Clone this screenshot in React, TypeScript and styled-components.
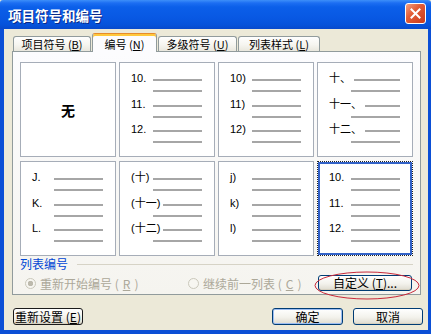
import React from 'react';
import styled, { createGlobalStyle } from 'styled-components';

const GlobalStyle = createGlobalStyle`
  html, body {
    margin: 0;
    padding: 0;
    background: #ECE9D8;
  }
  body {
    font-family: "Noto Sans CJK SC", "Liberation Sans", sans-serif;
  }
`;

const Window = styled.div`
  width: 431px;
  height: 334px;
  display: flex;
  flex-direction: column;
  background: #ECE9D8;
  overflow: hidden;
`;

const TitleBar = styled.div`
  height: 29px;
  flex: none;
  display: flex;
  align-items: center;
  justify-content: space-between;
  padding: 0 5px 0 8px;
  border-radius: 3px 3px 0 0;
  background: linear-gradient(
    to bottom,
    #3d8ff9 0px,
    #1c6ef2 3px,
    #0b5fe9 7px,
    #0858e3 18px,
    #0652da 25px,
    #0849cc 29px
  );
`;

const Title = styled.span`
  color: #fff;
  font-size: 13.5px;
  font-weight: bold;
  line-height: 16px;
  text-shadow: 1px 1px 0 #0c2a86;
`;

const CloseButton = styled.div`
  width: 21px;
  height: 21px;
  margin-top: -2px;
  box-sizing: border-box;
  border: 1px solid #fff;
  border-radius: 3px;
  display: flex;
  align-items: center;
  justify-content: center;
  background: linear-gradient(135deg, #f3a184 0%, #e35d37 40%, #c9391b 100%);
`;

const Body = styled.div`
  flex: 1;
  display: flex;
  flex-direction: column;
  border: solid #0b4fd6;
  border-width: 0 3px 4px 4px;
  padding: 4px 7px 5px 8px;
`;

const TabRow = styled.div`
  height: 18px;
  flex: none;
  display: flex;
  align-items: flex-end;
  gap: 1px;
  padding-left: 1px;
`;

const Tab = styled.div<{ $w: number; $active?: boolean }>`
  position: relative;
  z-index: ${(p) => (p.$active ? 1 : 0)};
  width: ${(p) => p.$w}px;
  height: ${(p) => (p.$active ? 19 : 15)}px;
  margin-bottom: ${(p) => (p.$active ? -1 : 0)}px;
  box-sizing: border-box;
  border: 1px solid #919b9c;
  border-bottom: none;
  border-top-color: ${(p) => (p.$active ? '#e68b2c' : '#919b9c')};
  border-radius: 3px 3px 0 0;
  display: flex;
  align-items: center;
  justify-content: center;
  padding-top: ${(p) => (p.$active ? 2 : 0)}px;
  font-size: 11px;
  color: #000;
  white-space: nowrap;
  background: ${(p) =>
    p.$active ? '#fcfcfe' : 'linear-gradient(#fefefe, #f6f5f0 55%, #e9e7dd)'};
  box-shadow: ${(p) => (p.$active ? 'inset 0 2px 0 #ffc83c' : 'none')};
`;

const Key = styled.span`
  text-decoration: underline;
`;

const Panel = styled.div`
  height: 244px;
  flex: none;
  box-sizing: border-box;
  border: 1px solid #919b9c;
  background: linear-gradient(#fcfcfe, #f5f4ef);
  padding: 10px 7px 2px 7px;
  display: flex;
  flex-direction: column;
`;

const Grid = styled.div`
  display: grid;
  grid-template-columns: repeat(4, 96px);
  grid-auto-rows: 95px;
  column-gap: 3px;
  row-gap: 4px;
`;

const Cell = styled.div<{ $selected?: boolean; $center?: boolean }>`
  box-sizing: border-box;
  background: #fff;
  border: 1px ${(p) => (p.$selected ? 'dotted #222' : 'solid #a6adb8')};
  box-shadow: ${(p) => (p.$selected ? 'inset 0 0 0 2px #3262c8' : 'none')};
  padding: 9px 12px 0 11px;
  display: flex;
  flex-direction: column;
  gap: 5.5px;
  ${(p) => p.$center && 'align-items: center; justify-content: center; padding: 0;'}
`;

const NoneText = styled.span`
  font-size: 14px;
  font-weight: bold;
  color: #000;
`;

const Item = styled.div`
  display: flex;
  flex-direction: column;
`;

const Head = styled.div`
  height: 12px;
  display: flex;
  align-items: flex-end;
`;

const Label = styled.span`
  min-width: 19px;
  font-family: "Liberation Sans", "Noto Sans CJK SC", sans-serif;
  font-size: 11px;
  line-height: 12px;
  color: #000;
  white-space: nowrap;
`;

const Line = styled.div<{ $indent?: number }>`
  height: 2px;
  background: #a6a6a6;
  flex: 1;
  margin-left: ${(p) => p.$indent ?? 3}px;
  margin-bottom: 3px;
`;

const SubLine = styled.div`
  height: 2px;
  background: #a6a6a6;
  margin: 6px 0 0 22px;
`;

const SectionRow = styled.div`
  height: 14px;
  margin-top: 1px;
  display: flex;
  align-items: center;
  gap: 9px;
`;

const SectionTitle = styled.span`
  font-size: 12px;
  line-height: 14px;
  color: #0046d5;
`;

const Rule = styled.div`
  flex: 1;
  height: 1px;
  background: #d6d3c6;
`;

const OptionRow = styled.div`
  height: 18px;
  margin-top: 3px;
  display: flex;
  align-items: center;
  padding-left: 5px;
`;

const Option = styled.label<{ $w?: number }>`
  display: flex;
  align-items: center;
  gap: 4px;
  width: ${(p) => (p.$w ? `${p.$w}px` : 'auto')};
  font-size: 12px;
  color: #aca899;
  white-space: nowrap;
`;

const Radio = styled.span<{ $checked?: boolean }>`
  width: 11px;
  height: 11px;
  flex: none;
  box-sizing: border-box;
  border-radius: 50%;
  border: 1px solid #cac8bb;
  background: ${(p) =>
    p.$checked
      ? 'radial-gradient(circle, #bdbaad 0 2.5px, #f7f6f1 3px)'
      : '#f7f6f1'};
`;

const Annotated = styled.div`
  position: relative;
  margin-left: auto;
  margin-right: 1px;
`;

const Mark = styled.svg`
  position: absolute;
  left: -4px;
  top: -4px;
  overflow: visible;
  pointer-events: none;
`;

const Button = styled.button<{ $w: number; $h?: number; $tone?: 'focus' | 'default' }>`
  width: ${(p) => p.$w}px;
  height: ${(p) => p.$h ?? 17}px;
  box-sizing: border-box;
  padding: 0;
  border: 1px solid ${(p) => (p.$tone === 'focus' ? '#1b1b1b' : '#003c74')};
  border-radius: 3px;
  background: linear-gradient(#ffffff, #f3f2ec 55%, #dedbcf);
  box-shadow: ${(p) =>
    p.$tone === 'default' ? 'inset 0 0 0 1px #9cbdf2' : 'inset 0 -1px 0 #d6d0c0'};
  font-family: "Noto Sans CJK SC", "Liberation Sans", sans-serif;
  font-size: 12px;
  line-height: 14px;
  color: #000;
  white-space: nowrap;
  display: flex;
  align-items: center;
  justify-content: center;
`;

const ButtonRow = styled.div`
  display: flex;
  align-items: center;
  gap: 10px;
  margin: 13px -2px 0 1px;
`;

const Spacer = styled.div`
  flex: 1;
`;

type Style = { items?: string[]; selected?: boolean };

const styles: Style[] = [
  {},
  { items: ['10.', '11.', '12.'] },
  { items: ['10)', '11)', '12)'] },
  { items: ['十、', '十一、', '十二、'] },
  { items: ['J.', 'K.', 'L.'] },
  { items: ['(十)', '(十一)', '(十二)'] },
  { items: ['j)', 'k)', 'l)'] },
  { items: ['10.', '11.', '12.'], selected: true },
];

const tabs = [
  { text: '项目符号 ', key: 'B', w: 78 },
  { text: '编号 ', key: 'N', w: 65, active: true },
  { text: '多级符号 ', key: 'U', w: 79 },
  { text: '列表样式 ', key: 'L', w: 82 },
];

export default function App() {
  return (
    <>
      <GlobalStyle />
      <Window>
        <TitleBar>
          <Title>项目符号和编号</Title>
          <CloseButton>
            <svg width="11" height="11" viewBox="0 0 11 11">
              <path d="M1.5 1.5 L9.5 9.5 M9.5 1.5 L1.5 9.5" stroke="#fff" strokeWidth="2" strokeLinecap="square" />
            </svg>
          </CloseButton>
        </TitleBar>
        <Body>
          <TabRow>
            {tabs.map((t) => (
              <Tab key={t.key} $w={t.w} $active={t.active}>
                {t.text}(<Key>{t.key}</Key>)
              </Tab>
            ))}
          </TabRow>
          <Panel>
            <Grid>
              {styles.map((s, i) =>
                s.items ? (
                  <Cell key={i} $selected={s.selected}>
                    {s.items.map((label) => (
                      <Item key={label}>
                        <Head>
                          <Label>{label}</Label>
                          <Line />
                        </Head>
                        <SubLine />
                      </Item>
                    ))}
                  </Cell>
                ) : (
                  <Cell key={i} $center>
                    <NoneText>无</NoneText>
                  </Cell>
                )
              )}
            </Grid>
            <SectionRow>
              <SectionTitle>列表编号</SectionTitle>
              <Rule />
            </SectionRow>
            <OptionRow>
              <Option $w={163}>
                <Radio $checked />
                重新开始编号 (<Key>R</Key>)
              </Option>
              <Option>
                <Radio />
                继续前一列表 (<Key>C</Key>)
              </Option>
              <Annotated>
                <Button $w={94} $h={16}>
                  自定义 (<Key>T</Key>)...
                </Button>
                <Mark width="106" height="30">
                  <ellipse cx="53" cy="14.5" rx="52" ry="13.5" fill="none" stroke="#c8283a" strokeWidth="1" />
                </Mark>
              </Annotated>
            </OptionRow>
          </Panel>
          <ButtonRow>
            <Button $w={70} $tone="focus">
              重新设置 (<Key>E</Key>)
            </Button>
            <Spacer />
            <Button $w={71} $tone="default">确定</Button>
            <Button $w={70}>取消</Button>
          </ButtonRow>
        </Body>
      </Window>
    </>
  );
}
